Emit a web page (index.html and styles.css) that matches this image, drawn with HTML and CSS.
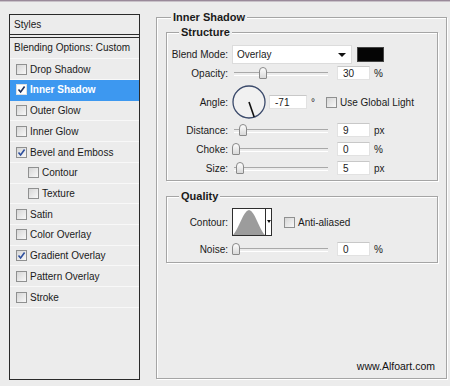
FILE: index.html
```html
<!DOCTYPE html>
<html lang="en">
<head>
  <meta charset="UTF-8">
  <title>Layer Style - Inner Shadow</title>
  <link rel="stylesheet" href="styles.css">
</head>
<body>
  <div class="titlebar"></div>

  <div class="dialog">
    <!-- Styles list -->
    <aside class="styles">
      <div class="styles-head">Styles</div>
      <div class="styles-blend">Blending Options: Custom</div>
      <ul class="styles-list">
        <li><span class="check"></span>Drop Shadow</li>
        <li class="selected"><span class="check on"><svg viewBox="0 0 9 9"><path d="M1.5 4.5 L3.6 7 L7.6 1.5"/></svg></span>Inner Shadow</li>
        <li><span class="check"></span>Outer Glow</li>
        <li><span class="check"></span>Inner Glow</li>
        <li><span class="check on"><svg viewBox="0 0 9 9"><path d="M1.5 4.5 L3.6 7 L7.6 1.5"/></svg></span>Bevel and Emboss</li>
        <li class="sub"><span class="check"></span>Contour</li>
        <li class="sub"><span class="check"></span>Texture</li>
        <li><span class="check"></span>Satin</li>
        <li><span class="check"></span>Color Overlay</li>
        <li><span class="check on"><svg viewBox="0 0 9 9"><path d="M1.5 4.5 L3.6 7 L7.6 1.5"/></svg></span>Gradient Overlay</li>
        <li><span class="check"></span>Pattern Overlay</li>
        <li><span class="check"></span>Stroke</li>
      </ul>
    </aside>

    <!-- Inner Shadow options -->
    <fieldset class="group group-outer">
      <legend>Inner Shadow</legend>

      <fieldset class="group group-structure">
        <legend>Structure</legend>

        <div class="row row-blend">
          <span class="label">Blend Mode:</span>
          <div class="select">Overlay<span class="arrow"></span></div>
          <span class="swatch"></span>
        </div>

        <div class="row row-opacity">
          <span class="label">Opacity:</span>
          <div class="slider"><span class="thumb" style="left: 27px"></span></div>
          <span class="field">30</span>
          <span class="unit">%</span>
        </div>

        <div class="row row-angle">
          <span class="label">Angle:</span>
          <svg class="dial" viewBox="0 0 34 34">
            <circle cx="17" cy="17" r="16" />
            <line x1="17" y1="17" x2="22.2" y2="32" />
          </svg>
          <span class="field field-wide">-71</span>
          <span class="unit deg">&deg;</span>
          <span class="check"></span>
          <span class="check-label">Use Global Light</span>
        </div>

        <div class="row row-distance">
          <span class="label">Distance:</span>
          <div class="slider"><span class="thumb" style="left: 7px"></span></div>
          <span class="field">9</span>
          <span class="unit">px</span>
        </div>

        <div class="row">
          <span class="label">Choke:</span>
          <div class="slider"><span class="thumb" style="left: 0px"></span></div>
          <span class="field">0</span>
          <span class="unit">%</span>
        </div>

        <div class="row">
          <span class="label">Size:</span>
          <div class="slider"><span class="thumb" style="left: 4px"></span></div>
          <span class="field">5</span>
          <span class="unit">px</span>
        </div>
      </fieldset>

      <fieldset class="group group-quality">
        <legend>Quality</legend>

        <div class="row row-contour">
          <span class="label">Contour:</span>
          <div class="contour">
            <svg viewBox="0 0 32 26">
              <path d="M0 26 C6 20 10 2 16 1 C22 2 26 20 32 26 Z" />
            </svg>
            <span class="contour-arrow"></span>
          </div>
          <span class="check check-aa"></span>
          <span class="check-label">Anti-aliased</span>
        </div>

        <div class="row row-noise">
          <span class="label">Noise:</span>
          <div class="slider"><span class="thumb" style="left: 0px"></span></div>
          <span class="field">0</span>
          <span class="unit">%</span>
        </div>
      </fieldset>

      <div class="watermark">www.Alfoart.com</div>
    </fieldset>
  </div>
</body>
</html>
```

FILE: styles.css
```css
* {
  box-sizing: border-box;
  margin: 0;
  padding: 0;
}

body {
  width: 450px;
  height: 386px;
  overflow: hidden;
  background: #ececec;
  font-family: "Liberation Sans", Arial, sans-serif;
  font-size: 10px;
  color: #1a1a1a;
}

.titlebar {
  height: 2px;
  background: #9a8a9a;
  border-bottom: 1px solid #c9c2c9;
}

.dialog {
  display: flex;
  align-items: flex-start;
  padding: 8px 0 0 9px;
}

/* Styles list */
.styles {
  width: 131px;
  height: 366px;
  margin-top: 4px;
  border: 1px solid #2a2a2a;
  background: #ececec;
}

.styles-head {
  height: 20px;
  line-height: 19px;
  padding-left: 4px;
  border-bottom: 1px solid #2a2a2a;
}

.styles-blend {
  height: 22.3px;
  line-height: 20px;
  margin-top: 2px;
  padding-left: 4px;
  border-top: 1px solid #2a2a2a;
  border-bottom: 1px solid #f8f8f8;
}

.styles-list {
  list-style: none;
}

.styles-list li {
  display: flex;
  align-items: center;
  height: 20.73px;
  padding-left: 6px;
  border-bottom: 1px solid #f8f8f8;
}

.styles-list li.sub {
  padding-left: 18px;
}

.styles-list li.selected {
  background: #3d98f0;
  color: #fff;
  font-weight: bold;
  border-bottom-color: #3d98f0;
}

.check {
  display: inline-flex;
  align-items: center;
  justify-content: center;
  width: 11px;
  height: 11px;
  margin-right: 3px;
  border: 1px solid #8f9090;
  background: linear-gradient(135deg, #d6d6d6, #f8f8f8);
  flex-shrink: 0;
}

.check svg {
  width: 9px;
  height: 9px;
  fill: none;
  stroke: #2d4f9e;
  stroke-width: 1.6;
}

.selected .check {
  background: #fff;
  border-color: #e0e0e0;
}

.selected .check svg {
  stroke: #1f2f5a;
}

/* Group boxes */
.group {
  border: 1px solid #a5a5a5;
  box-shadow: inset 1px 1px 0 #fff, 1px 1px 0 #fff;
}

.group legend {
  font-weight: bold;
  font-size: 11px;
  line-height: 14px;
  padding: 0 2px;
  margin-left: 12px;
  background: #ececec;
}

.group-outer {
  width: 291px;
  margin-left: 16px;
  padding: 1px 8px 6px 9px;
}

.group-outer > legend {
  margin-left: 5px;
}

.group-structure {
  padding: 6px 0 5px 0;
}

.group-quality {
  margin-top: 8px;
  padding: 5px 0 6px 0;
}

.row {
  display: flex;
  align-items: center;
  height: 14px;
  margin-top: 5px;
}

.label {
  width: 61px;
  margin-right: 4px;
  text-align: right;
  flex-shrink: 0;
}

.row-blend {
  height: 18px;
  margin-top: 0;
}

.row-opacity {
  margin-top: 3px;
}

.row-angle {
  height: 34px;
}

.row-distance {
  margin-top: 4px;
}

/* Controls */
.select {
  position: relative;
  display: flex;
  align-items: center;
  width: 120px;
  height: 19px;
  padding-left: 4px;
  background: #fff;
  border: 1px solid #dcdcdc;
}

.arrow {
  position: absolute;
  right: 5px;
  top: 7px;
  border-left: 4px solid transparent;
  border-right: 4px solid transparent;
  border-top: 4px solid #111;
}

.swatch {
  width: 27px;
  height: 15px;
  margin-left: 5px;
  background: #050505;
  border: 1px solid #444;
}

.slider {
  position: relative;
  width: 96px;
  height: 14px;
  margin-right: 9px;
}

.slider::before {
  content: "";
  position: absolute;
  left: 2px;
  right: 0;
  top: 6px;
  height: 2px;
  border-top: 1px solid #a9a9a9;
  border-bottom: 1px solid #fff;
}

.thumb {
  position: absolute;
  top: 1px;
  width: 8px;
  height: 12px;
  border: 1px solid #8a8a8a;
  border-radius: 4px 4px 1px 1px;
  background: linear-gradient(#fdfdfd, #d9d9d9);
}

.field {
  width: 33px;
  height: 14px;
  line-height: 13px;
  padding-left: 5px;
  background: #fff;
  border: 1px solid #e2e2e2;
  border-top-color: #c8c8c8;
}

.field-wide {
  width: 38px;
  margin-left: 3px;
}

.unit {
  margin-left: 4px;
}

.deg {
  margin-right: 11px;
}

.dial {
  width: 34px;
  height: 34px;
  flex-shrink: 0;
}

.dial circle {
  fill: #f1f1f1;
  stroke: #3b4a6b;
  stroke-width: 1.3;
}

.dial line {
  stroke: #111;
  stroke-width: 1.6;
}

.check-label {
  margin-left: 0;
}

.row-contour {
  height: 28px;
  margin-top: 0;
}

.contour {
  display: flex;
  width: 40px;
  height: 28px;
  border: 1px solid #2e2e2e;
  background: #fff;
}

.contour svg {
  width: 32px;
  height: 26px;
  fill: #9c9c9c;
}

.contour-arrow {
  position: relative;
  flex: 1;
  border-left: 1px solid #2e2e2e;
}

.contour-arrow::after {
  content: "";
  position: absolute;
  left: 1px;
  top: 11px;
  border-left: 2px solid transparent;
  border-right: 2px solid transparent;
  border-top: 3px solid #111;
}

.check-aa {
  margin-left: 12px;
}

.row-noise {
  margin-top: 6px;
}

.watermark {
  margin-top: 97px;
  padding-right: 3px;
  text-align: right;
  font-size: 10.5px;
  line-height: 12px;
  color: #111;
}
```
